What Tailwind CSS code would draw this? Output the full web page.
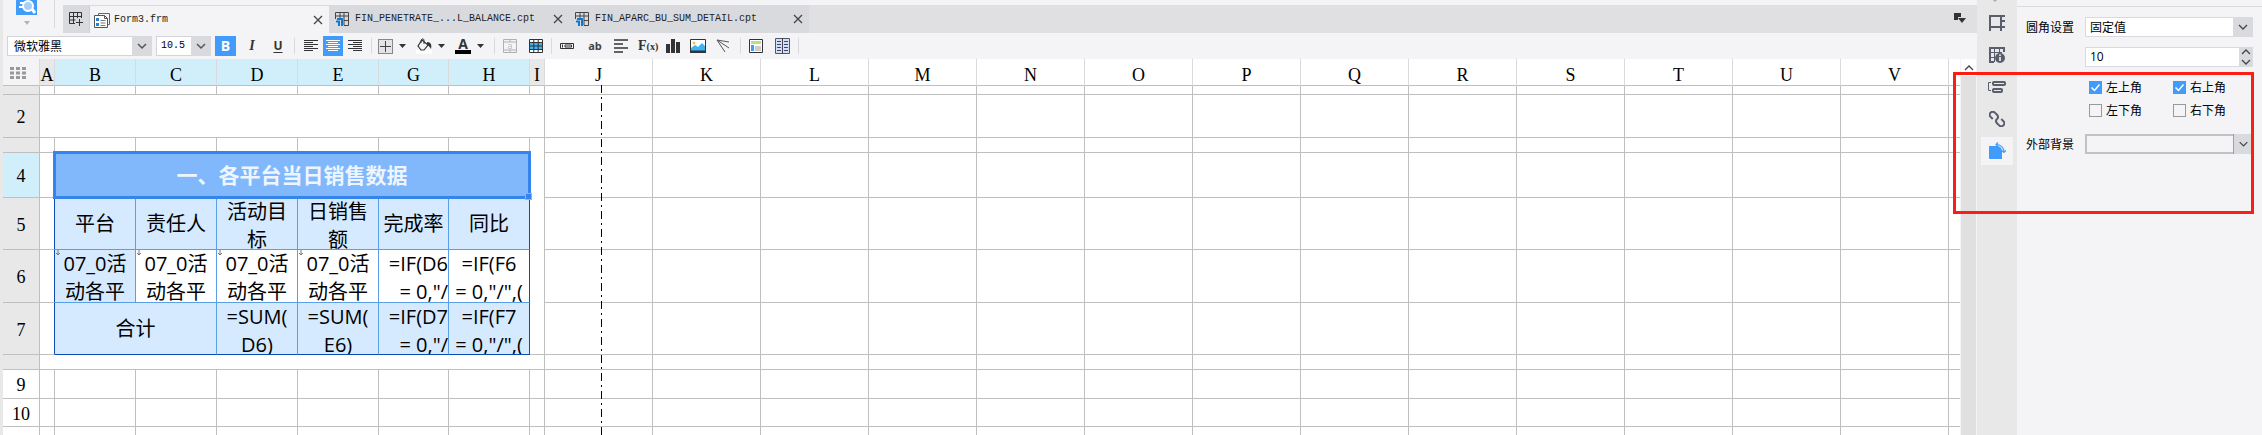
<!DOCTYPE html>
<html lang="zh-CN">
<head>
    <meta charset="UTF-8">
    <meta name="viewport" content="width=device-width, initial-scale=1.0">
    <title>Form3.frm</title>
    <script src="https://cdn.jsdelivr.net/npm/@tailwindcss/browser@4"></script>
</head>
<body class="relative flex h-screen overflow-hidden bg-[#e8e8e8] pl-[3px] font-['Noto_Sans_CJK_SC',sans-serif] text-xs text-black">

    <main class="flex min-w-0 flex-1 flex-col bg-[#f4f4f6]">
        <!-- file tabs -->
        <header class="flex h-[33px] shrink-0">
            <div class="flex h-7 w-[52px] shrink-0 justify-center border-r border-[#d9dade] pr-1">
                <button aria-label="预览" class="h-7 w-[21px]">
                    <svg class="h-7 w-[21px]" viewBox="0 0 21 28">
                        <path d="M0 0h21v15H0z" fill="#409bfb"/>
                        <path d="M4 3h5M3 7h5" stroke="#fff" stroke-width="2"/>
                        <circle cx="12" cy="6" r="5" fill="#a8d0fa" stroke="#fff" stroke-width="2"/>
                        <path d="M16 9l3 4" stroke="#fff" stroke-width="3"/>
                        <path d="M8 21h6l-3 4z" fill="#b4b4b8"/>
                    </svg>
                </button>
            </div>
            <nav class="ml-2 mt-[5px] flex h-7 flex-1 bg-[#e0e0e2] font-['Liberation_Mono',monospace] text-[10px] text-[#222]">
                <button aria-label="新建" class="flex w-[27px] items-center justify-center border-r border-[#cfcfd3] bg-[#d9dade]">
                    <svg class="h-4 w-4" viewBox="0 0 16 16" fill="none" stroke="#333">
                        <path d="M7 12.500H1.500v-11h12V7M1.500 5.500h12M1.500 9h6M5.500 1.500v11M9.500 1.500V7"/>
                        <path d="M11.500 8v7M8 11.500h7"/>
                    </svg>
                </button>
                <div class="flex w-[239px] items-center border-t border-[#d9dade] bg-[#f4f4f6] pl-1 pr-1">
                    <svg class="h-4 w-4" viewBox="0 0 16 16" fill="none">
                        <path d="M4.500 3V1.500h11v11H14" stroke="#666" /><path d="M.5 3.500h10l3 3v9H.5z" fill="#fff" stroke="#555"/>
                        <path d="M10.500 3.500v3h3" stroke="#555"/>
                        <path d="M2 6h3v3H2zM2 11h3v3H2z" fill="#2f7fd0"/><path d="M6.500 8.500h5M6.500 11h5M6.500 13.500h5" stroke="#777"/>
                    </svg>
                    <a href="#" class="ml-1 flex-1">Form3.frm</a>
                    <button aria-label="关闭 Form3.frm" class="p-0.5"><svg class="h-2.5 w-2.5" viewBox="0 0 10 10" stroke="#444" stroke-width="1.300"><path d="M1 1l8 8M9 1l-8 8"/></svg></button>
                </div>
                <div class="flex w-60 items-center bg-[#d9dade] pl-1.5 pr-1">
                    <svg class="h-3.5 w-3.5" viewBox="0 0 14 14" fill="none" stroke="#444">
                        <path d="M.5 7V.5h13v13H9M.5 4h13M5 .5V6M9 .5v13M9 8.500h5"/><path d="M2 7h6M1 9.500h3V14M7 7v7" stroke="#1478c8" stroke-width="2"/>
                    </svg>
                    <a href="#" class="ml-1.5 flex-1">FIN_PENETRATE_...L_BALANCE.cpt</a>
                    <button aria-label="关闭 FIN_PENETRATE" class="p-0.5"><svg class="h-2.5 w-2.5" viewBox="0 0 10 10" stroke="#444" stroke-width="1.300"><path d="M1 1l8 8M9 1l-8 8"/></svg></button>
                </div>
                <div class="flex w-60 items-center bg-[#d9dade] pl-1.5 pr-1">
                    <svg class="h-3.5 w-3.5" viewBox="0 0 14 14" fill="none" stroke="#444">
                        <path d="M.5 7V.5h13v13H9M.5 4h13M5 .5V6M9 .5v13M9 8.500h5"/><path d="M2 7h6M1 9.500h3V14M7 7v7" stroke="#1478c8" stroke-width="2"/>
                    </svg>
                    <a href="#" class="ml-1.5 flex-1">FIN_APARC_BU_SUM_DETAIL.cpt</a>
                    <button aria-label="关闭 FIN_APARC" class="p-0.5"><svg class="h-2.5 w-2.5" viewBox="0 0 10 10" stroke="#444" stroke-width="1.300"><path d="M1 1l8 8M9 1l-8 8"/></svg></button>
                </div>
                <button aria-label="更多" class="ml-auto mr-[11px]">
                    <svg class="h-3 w-3" viewBox="0 0 12 12" fill="#333"><path d="M0 0h7v4H4v3H0zM4 5h8l-4 5z"/></svg>
                </button>
            </nav>
        </header>

        <!-- format toolbar -->
        <div class="flex h-[26px] shrink-0 items-center pl-1">
            <div class="relative w-[145px]">
                <select aria-label="字体" class="block h-5 w-full appearance-none border border-[#d4d4d8] bg-white pl-1.5 leading-4 outline-none"><option>微软雅黑</option></select>
                <svg class="pointer-events-none absolute right-0 top-0 h-5 w-5 bg-[#d9dade]" viewBox="0 0 20 20" fill="none" stroke="#555" stroke-width="1.500"><path d="M6 8l4 4 4-4"/></svg>
            </div>
            <div class="relative ml-1 w-[55px]">
                <select aria-label="字号" class="block h-5 w-full appearance-none border border-[#d4d4d8] bg-white pl-1 font-['Liberation_Mono',monospace] text-[10px] outline-none"><option>10.5</option></select>
                <svg class="pointer-events-none absolute right-0 top-0 h-5 w-5 bg-[#d9dade]" viewBox="0 0 20 20" fill="none" stroke="#555" stroke-width="1.500"><path d="M6 8l4 4 4-4"/></svg>
            </div>
            <button class="ml-1 h-5 w-[21px] bg-[#409bfb] font-['Open_Sans',sans-serif] text-sm leading-5 font-bold text-white">B</button>
            <button class="ml-1.5 h-5 w-5 font-['Liberation_Serif',serif] text-sm leading-5 font-bold text-[#333] italic">I</button>
            <button class="ml-1.5 h-5 w-5 font-['Open_Sans',sans-serif] text-xs leading-5 font-bold text-[#333] underline underline-offset-2">U</button>
            <span class="ml-1.5 h-4 w-px bg-[#d9dade]"></span>
            <button aria-label="左对齐" class="ml-1.5 flex h-5 w-5 items-center justify-center">
                <svg class="h-3 w-3.5" viewBox="0 0 14 12" stroke="#333"><path d="M0 .5h14M0 2.500h9M0 4.500h14M0 6.500h9M0 8.500h14M0 10.500h9"/></svg>
            </button>
            <button aria-label="居中" class="ml-0.5 flex h-5 w-5 items-center justify-center bg-[#409bfb]">
                <svg class="h-3 w-3.5" viewBox="0 0 14 12" stroke="#fff"><path d="M0 .5h14M2 2.500h10M0 4.500h14M2 6.500h10M0 8.500h14M2 10.500h10"/></svg>
            </button>
            <button aria-label="右对齐" class="ml-0.5 flex h-5 w-5 items-center justify-center">
                <svg class="h-3 w-3.5" viewBox="0 0 14 12" stroke="#333"><path d="M0 .5h14M5 2.500h9M0 4.500h14M5 6.500h9M0 8.500h14M5 10.500h9"/></svg>
            </button>
            <span class="ml-1.5 h-4 w-px bg-[#d9dade]"></span>
            <button aria-label="边框" class="ml-1.5 flex items-center gap-1.5">
                <svg class="h-[15px] w-[15px]" viewBox="0 0 15 15" fill="none"><path d="M.5 .5h14v14H.5z" fill="#e4e4e6" stroke="#222" stroke-dasharray="1 1"/><path d="M7.500 2v11M2 7.500h11" stroke="#444"/></svg>
                <svg class="h-1 w-[7px]" viewBox="0 0 7 4"><path d="M0 0h7L3.500 4z" fill="#333"/></svg>
            </button>
            <button aria-label="填充" class="ml-2.5 flex items-center gap-1.5">
                <svg class="h-4 w-4" viewBox="0 0 16 16" fill="none"><path d="M0 12h16v4H0z" fill="#fff"/><path d="M6 2l6 5-4 5H5L2 8z" stroke="#333" stroke-width="1.200"/><path d="M5 5c-1-4 3-6 3-2v3" stroke="#333"/><path d="M11 4c4 0 5 3 4 7-1-2-2-3-4-4z" fill="#333"/></svg>
                <svg class="h-1 w-[7px]" viewBox="0 0 7 4"><path d="M0 0h7L3.500 4z" fill="#333"/></svg>
            </button>
            <button aria-label="字体颜色" class="ml-2.5 flex items-center gap-1.5">
                <span class="h-4 w-4 border-b-4 border-black font-['Open_Sans',sans-serif] text-sm leading-3 font-bold text-[#333]">A</span>
                <svg class="h-1 w-[7px]" viewBox="0 0 7 4"><path d="M0 0h7L3.500 4z" fill="#333"/></svg>
            </button>
            <span class="ml-2.5 h-4 w-px bg-[#d9dade]"></span>
            <button aria-label="合并" class="ml-2">
                <svg class="block h-3.5 w-3.5" viewBox="0 0 14 14" fill="none" stroke="#b0b0b0"><path d="M.5 .5h13v13H.5zM.5 3h13M.5 11h13M7 .5V3M7 11v3"/><path d="M5 5.500h3.500v4H5.500v-2h3" stroke="#ccc"/></svg>
            </button>
            <button aria-label="单元格" class="ml-3">
                <svg class="block h-3.5 w-3.5" viewBox="0 0 14 14"><path d="M.5 .5h13v13H.5z" fill="#fff" stroke="#333"/><path d="M1 4h12v6H1z" fill="#3fb4f5"/><path d="M0 3.500h14M0 7h14M0 10.500h14M4.800 0v14M9.200 0v14" stroke="#333"/></svg>
            </button>
            <span class="ml-2 h-4 w-px bg-[#d9dade]"></span>
            <button aria-label="控件" class="ml-2">
                <svg class="block h-1.5 w-3.5" viewBox="0 0 14 6" fill="none" stroke="#333"><path d="M.5 .5h13v5H.5z"/><path d="M2.500 1.500v3M5 2h6.500v2H5z"/></svg>
            </button>
            <button class="ml-3 w-[18px] font-['Open_Sans',sans-serif] text-[11px] font-bold text-[#444]">ab</button>
            <button aria-label="段落" class="ml-2.5">
                <svg class="block h-3.5 w-3.5" viewBox="0 0 14 14" stroke="#333" stroke-width="1.500"><path d="M0 1h14M0 5h9M0 9h14M0 13h9"/></svg>
            </button>
            <button class="ml-2.5 w-[18px] font-['Liberation_Serif',serif] text-sm leading-5 font-bold text-[#333]">F<span class="text-[10px]">(x)</span></button>
            <button aria-label="图表" class="ml-2.5">
                <svg class="block h-3.5 w-3.5" viewBox="0 0 14 14" fill="#333"><path d="M0 5h4v9H0zM5 0h4v14H5zM10 3h4v11h-4z"/></svg>
            </button>
            <button aria-label="图片" class="ml-2.5">
                <svg class="block h-3.5 w-4" viewBox="0 0 16 14"><path d="M.5 .5h15v13H.5z" fill="#fff" stroke="#333"/><circle cx="4" cy="4" r="1.500" fill="#ffc048"/><path d="M1 9l4-3 3 2 4-4 3 3v5H1z" fill="#3fb4f5"/><path d="M0 11.500h16V14H0z" fill="#333"/></svg>
            </button>
            <button aria-label="斜线" class="ml-2.5">
                <svg class="block h-3.5 w-3.5" viewBox="0 0 14 14" stroke="#555" fill="none"><path d="M13 3L1 1l8 12M1 1l12 8"/></svg>
            </button>
            <span class="ml-2.5 h-4 w-px bg-[#d9dade]"></span>
            <button aria-label="子报表" class="ml-2">
                <svg class="block h-3.5 w-3.5" viewBox="0 0 14 14"><path d="M.5 .5h13v13H.5z" fill="#fff" stroke="#333"/><path d="M2 2h10v3H2z" fill="#b4e08c"/><path d="M2 6h3v6H2z" fill="#409bfb"/><path d="M6 7h6v5H6z" fill="#ccc"/></svg>
            </button>
            <button aria-label="分栏" class="ml-3">
                <svg class="block h-4 w-[15px]" viewBox="0 0 15 16"><path d="M.5 .5h14v15H.5z" fill="#cfe0fa" stroke="#556"/><path d="M7.500 0v16M2 3.500h4M2 6.500h4M2 9.500h4M2 12.500h4M9 3.500h4M9 6.500h4M9 9.500h4M9 12.500h4" stroke="#445"/></svg>
            </button>
            <span class="ml-2 h-4 w-px bg-[#d9dade]"></span>
        </div>

        <!-- sheet -->
        <div class="flex min-h-0 flex-1">
            <div class="relative min-w-0 flex-1 overflow-hidden bg-white">
                <table class="w-full table-fixed border-separate border-spacing-0 text-center">
                    <colgroup>
                        <col class="w-[37px]"><col class="w-[15px]">
                        <col class="w-[81px]"><col class="w-[81px]"><col class="w-[81px]"><col class="w-[81px]"><col class="w-[70px]"><col class="w-[81px]">
                        <col class="w-[15px]">
                        <col class="w-[108px]"><col class="w-[108px]"><col class="w-[108px]"><col class="w-[108px]"><col class="w-[108px]"><col class="w-[108px]"><col class="w-[108px]"><col class="w-[108px]"><col class="w-[108px]"><col class="w-[108px]"><col class="w-[108px]"><col class="w-[108px]"><col class="w-[108px]">
                        <col>
                    </colgroup>
                    <thead class="font-['Liberation_Serif',serif] text-lg leading-5">
                        <tr id="letters" class="h-[27px] *:border-r *:border-b *:border-r-[#d9dade] *:border-b-[#bfbfbf] *:p-0 *:pt-1.5 *:font-normal">
                            <td class="bg-[#f4f4f6] pr-1.5!">
                                <svg class="mx-auto mb-1 block h-3 w-4" viewBox="0 0 16 12" stroke="#999" stroke-width="3" stroke-dasharray="4 2"><path d="M0 1.500h16M0 6h16M0 10.500h16"/></svg>
                            </td>
                            <th class="bg-[#e8e8e8]">A</th>
                            <th class="bg-[#d0effb]">B</th>
                            <th class="bg-[#d0effb]">C</th>
                            <th class="bg-[#d0effb]">D</th>
                            <th class="bg-[#d0effb]">E</th>
                            <th class="bg-[#d0effb]">G</th>
                            <th class="bg-[#d0effb]">H</th>
                            <th class="bg-[#e8e8e8]">I</th>
                        </tr>
                    </thead>
                    <tbody id="rows" class="font-['Open_Sans','Noto_Sans_CJK_SC',sans-serif] text-xl leading-7 *:*:border-r *:*:border-b *:*:border-[#bfbfbf] *:*:p-0 *:*:font-normal">
                        <tr class="h-[9px]"><th class="bg-[#e8e8e8]"></th><td></td><td></td><td></td><td></td><td></td><td></td><td></td><td></td></tr>
                        <tr class="h-[43px]"><th class="bg-[#e8e8e8] pt-0.5! font-['Liberation_Serif',serif] text-lg">2</th><td colspan="8"></td></tr>
                        <tr class="h-[15px]"><th class="bg-[#e8e8e8]"></th><td></td><td></td><td></td><td></td><td></td><td></td><td></td><td rowspan="5"></td></tr>
                        <tr class="h-[45px]">
                            <th class="bg-[#d0effb] pt-0.5! font-['Liberation_Serif',serif] text-lg">4</th><td></td>
                            <td colspan="6" class="relative">
                                <div class="absolute -inset-0.5 flex items-center justify-center border-3 border-[#3584ee] bg-[#80b8fb] text-[21px] font-bold text-[#eef5ff]">一、各平台当日销售数据</div>
                                <span class="absolute -right-0.5 -bottom-0.5 size-[5px] bg-[#3584ee] outline outline-[#80b8fb]"></span>
                            </td>
                        </tr>
                        <tr class="h-[52px] [&>:nth-child(n+3):not([data-blank])]:border-[#5b9ee8]! [&>:nth-child(n+3):not([data-blank])]:bg-[#d5e9ff]">
                            <th class="bg-[#e8e8e8] pt-0.5! font-['Liberation_Serif',serif] text-lg">5</th><td class="border-r-[#0b4db3]!"></td>
                            <td>平台</td>
                            <td>责任人</td>
                            <td><div class="h-[51px]">活动目<br>标</div></td>
                            <td><div class="h-[51px]">日销售<br>额</div></td>
                            <td>完成率</td>
                            <td data-edge>同比</td>
                        </tr>
                        <tr class="h-[53px] [&>:nth-child(n+3):not([data-blank])]:border-[#5b9ee8]!">
                            <th class="bg-[#e8e8e8] pt-0.5! font-['Liberation_Serif',serif] text-lg">6</th><td class="border-r-[#0b4db3]!"></td>
                            <td class="bg-[#d5e9ff]"><div data-mark class="relative h-[52px] overflow-hidden">07_0活<br>动各平</div></td>
                            <td><div data-mark class="relative h-[52px] overflow-hidden">07_0活<br>动各平</div></td>
                            <td><div data-mark class="relative h-[52px] overflow-hidden">07_0活<br>动各平</div></td>
                            <td><div data-mark class="relative h-[52px] overflow-hidden">07_0活<br>动各平</div></td>
                            <td><div class="h-[52px] overflow-hidden text-right whitespace-nowrap">=IF(D6<br>= 0,"/</div></td>
                            <td data-edge><div class="h-[52px] overflow-hidden whitespace-nowrap">=IF(F6<br>= 0,"/",(</div></td>
                        </tr>
                        <tr class="h-[52px] [&>:nth-child(n+3):not([data-blank])]:border-[#5b9ee8]! [&>:nth-child(n+3):not([data-blank])]:border-b-[#0b4db3]! [&>:nth-child(n+3):not([data-blank])]:bg-[#d5e9ff]">
                            <th class="bg-[#e8e8e8] pt-0.5! font-['Liberation_Serif',serif] text-lg">7</th><td class="border-r-[#0b4db3]!"></td>
                            <td colspan="2">合计</td>
                            <td><div class="h-[51px] overflow-hidden">=SUM(<br>D6)</div></td>
                            <td><div class="h-[51px] overflow-hidden">=SUM(<br>E6)</div></td>
                            <td><div class="h-[51px] overflow-hidden text-right whitespace-nowrap">=IF(D7<br>= 0,"/</div></td>
                            <td data-edge><div class="h-[51px] overflow-hidden whitespace-nowrap">=IF(F7<br>= 0,"/",(</div></td>
                        </tr>
                        <tr class="h-[15px]"><th class="bg-[#e8e8e8]"></th><td colspan="8"></td></tr>
                        <tr class="h-[29px] leading-6"><th class="pt-0.5! font-['Liberation_Serif',serif] text-lg leading-6">9</th><td></td><td></td><td></td><td></td><td></td><td></td><td></td><td></td></tr>
                        <tr class="h-7"><th class="pt-0.5! font-['Liberation_Serif',serif] text-lg leading-6">10</th><td></td><td></td><td></td><td></td><td></td><td></td><td></td><td></td></tr>
                        <tr class="h-7"><th></th><td></td><td></td><td></td><td></td><td></td><td></td><td></td><td></td></tr>
                    </tbody>
                </table>
                <!-- page break -->
                <svg class="pointer-events-none absolute top-[26px] left-[598px] h-full w-px" stroke="#000" stroke-width="2"><line x1="0" y1="0" x2="0" y2="2000" stroke-dasharray="8 4 2 4"/></svg>
            </div>
            <div class="flex w-[17px] flex-col border-x border-[#f4f4f6] bg-[#e0e0e0]">
                <button aria-label="向上滚动" class="flex h-[17px] items-center justify-center bg-white">
                    <svg class="h-1.5 w-2.5" viewBox="0 0 10 6" fill="none" stroke="#444" stroke-width="1.300"><path d="M1 5l4-4 4 4"/></svg>
                </button>
            </div>
        </div>
    </main>

    <!-- property categories -->
    <aside class="relative flex w-10 shrink-0 flex-col items-center gap-1 pt-[9px]">
        <svg class="absolute top-0 left-4 h-0.5 w-1" viewBox="0 0 4 2" fill="#aaa"><path d="M0 0h4L2 2z"/></svg>
        <button aria-label="单元格元素" class="flex h-7 w-8 items-center justify-center">
            <svg class="h-4 w-4" viewBox="0 0 16 16" fill="none" stroke="#5a5e6a" stroke-width="2"><path d="M1 16V1h15M1 12h15M12 1v15M12 6h4"/></svg>
        </button>
        <button aria-label="单元格属性" class="flex h-7 w-8 items-center justify-center">
            <svg class="h-4 w-4" viewBox="0 0 16 16" fill="none" stroke="#5a5e6a"><path d="M5 15H1V1h14v4" stroke-width="2"/><path d="M1 5.500h12M1 10.500h5M5.500 1v14M10.500 1v4"/><circle cx="11" cy="11" r="5" fill="#5a5e6a" stroke="none"/><path d="M11 7.500v1.500M11 10v4" stroke="#fff" stroke-width="1.500"/></svg>
        </button>
        <button aria-label="悬浮元素" class="flex h-7 w-8 items-center justify-center">
            <svg class="h-3.5 w-[18px]" viewBox="0 0 18 14" fill="none" stroke="#5a5e6a"><path d="M3 2.500H.5v8H3"/><rect x="5" y="2" width="12" height="3" rx="1" stroke-width="2"/><rect x="5" y="9" width="9" height="3" rx="1" stroke-width="2"/></svg>
        </button>
        <button aria-label="超级链接" class="flex h-7 w-8 items-center justify-center">
            <svg class="h-4 w-4" viewBox="0 0 16 16" fill="none" stroke="#5a5e6a" stroke-width="2"><g transform="rotate(45 8 8)"><path d="M5 11H2a3 3 0 010-6h3a3 3 0 013 3M11 5h3a3 3 0 010 6h-3a3 3 0 01-3-3"/></g></svg>
        </button>
        <button aria-label="圆角" class="flex h-7 w-8 items-center justify-center bg-[#f4f4f6]">
            <svg class="h-[18px] w-[18px]" viewBox="0 0 18 18" fill="none"><path d="M1 4h8a5 5 0 015 5v8H2a1 1 0 01-1-1z" fill="#409bfb"/><path d="M10 .5L8 2.500l2 2M8.500 2.500c4 0 7.500 3 7.500 7.500M13.500 8.500l2.500 2 2-2" stroke="#409bfb" stroke-width="1.200"/></svg>
        </button>
    </aside>

    <!-- property form -->
    <form class="w-[245px] shrink-0 bg-[#f4f4f6] pt-1.5">
        <div class="grid grid-cols-[59px_1fr] items-center gap-y-2.5 border-t border-[#d9dade] pt-2.5 pr-[9px] pl-[9px] leading-5">
            <label for="corner">圆角设置</label>
            <div class="relative">
                <select id="corner" class="block h-5 w-full appearance-none border border-[#d9dade] bg-white pl-1 leading-4 outline-none"><option>固定值</option></select>
                <svg class="pointer-events-none absolute top-0 right-0 h-5 w-5 bg-[#d9dade]" viewBox="0 0 20 20" fill="none" stroke="#444" stroke-width="1.300"><path d="M6 8l4 4 4-4"/></svg>
            </div>
            <div class="relative col-start-2">
                <input type="text" value="10" aria-label="圆角大小" class="block h-5 w-full border border-[#d9dade] bg-white pl-1 font-['Open_Sans',sans-serif] outline-none">
                <svg class="pointer-events-none absolute top-0 right-0 h-5 w-3.5 bg-[#d9dade]" viewBox="0 0 14 20" fill="none" stroke="#444" stroke-width="1.300"><path d="M3 7l4-4 4 4M3 13l4 4 4-4"/></svg>
            </div>
            <div class="col-start-2 grid grid-cols-2 gap-x-1 gap-y-[3px] pb-1 pl-1">
                <label class="flex items-center gap-1"><input type="checkbox" checked class="peer sr-only"><svg class="size-[13px] bg-[#409bfb]" viewBox="0 0 13 13" fill="none" stroke="#fff" stroke-width="1.500"><path d="M2.500 6.500l3 3 5-6"/></svg>左上角</label>
                <label class="flex items-center gap-1"><input type="checkbox" checked class="peer sr-only"><svg class="size-[13px] bg-[#409bfb]" viewBox="0 0 13 13" fill="none" stroke="#fff" stroke-width="1.500"><path d="M2.500 6.500l3 3 5-6"/></svg>右上角</label>
                <label class="flex items-center gap-1"><input type="checkbox" class="size-[13px] appearance-none border border-[#999]">左下角</label>
                <label class="flex items-center gap-1"><input type="checkbox" class="size-[13px] appearance-none border border-[#999]">右下角</label>
            </div>
            <label for="outer">外部背景</label>
            <div class="relative">
                <select id="outer" class="block h-5 w-full appearance-none border-2 border-[#c2c2c6] bg-[#f4f4f6] outline-none"><option></option></select>
                <svg class="pointer-events-none absolute top-0 right-0 h-5 w-5 border-l border-[#a0a0a4] bg-[#d9dade]" viewBox="0 0 20 20" fill="none" stroke="#444" stroke-width="1.300"><path d="M6 8l4 4 4-4"/></svg>
            </div>
        </div>
    </form>

    <!-- callout -->
    <div class="pointer-events-none absolute top-[72px] right-2 h-[142px] w-[301px] border-3 border-[#fb1e12]"></div>

    <script>
        const letters = document.getElementById('letters');
        [...'JKLMNOPQRSTUV', ''].forEach(letter => {
            const th = document.createElement('th');
            th.textContent = letter;
            letters.appendChild(th);
        });
        document.querySelectorAll('#rows tr').forEach(row => {
            for (let i = 0; i < 14; i++) row.insertCell().dataset.blank = '';
        });
        document.querySelectorAll('#letters > :last-child, #rows tr > :last-child').forEach(cell => {
            cell.classList.add('border-r-0!');
        });
        // right edge of the data block
        document.querySelectorAll('[data-edge]').forEach(cell => {
            cell.style.setProperty('border-right-color', '#0b4db3', 'important');
        });
        // expand-direction arrows
        document.querySelectorAll('[data-mark]').forEach(cell => {
            cell.insertAdjacentHTML('beforeend', '<svg class="absolute top-0 left-0 h-1.5 w-1.5" viewBox="0 0 6 6" fill="none" stroke="#777"><path d="M3 0v5M1 3l2 2 2-2"/></svg>');
        });
    </script>
</body>
</html>
